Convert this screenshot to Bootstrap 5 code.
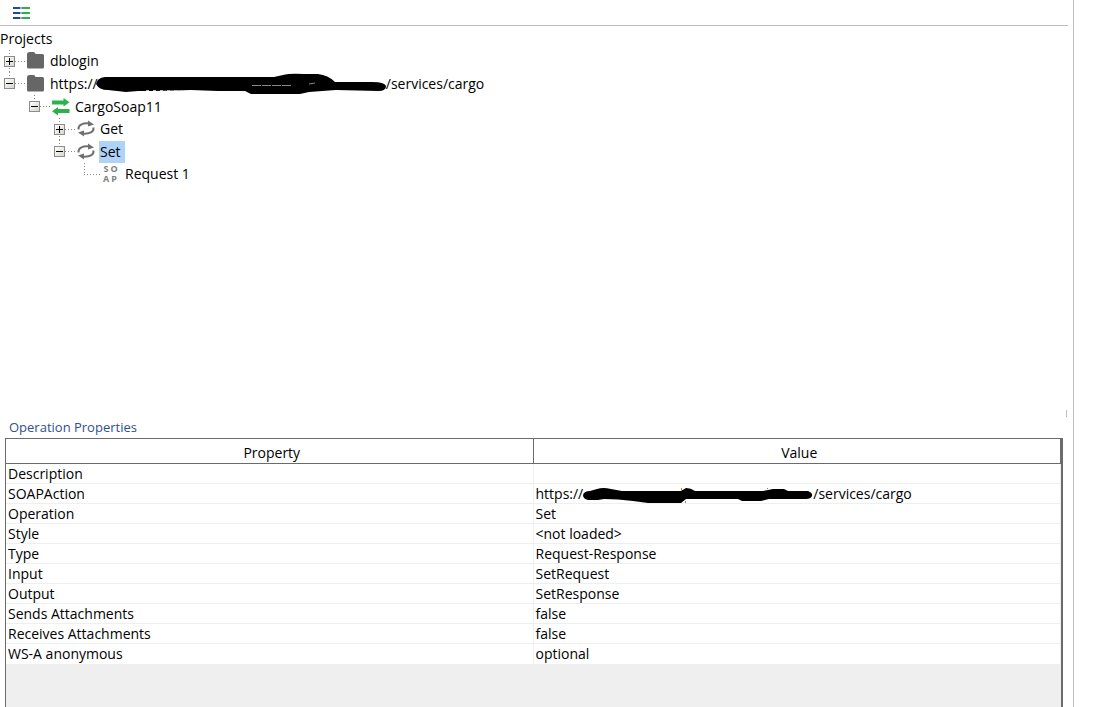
<!DOCTYPE html>
<html lang="en">
<head>
<meta charset="utf-8">
<meta name="viewport" content="width=device-width, initial-scale=1">
<title>Projects</title>
<link href="https://cdn.jsdelivr.net/npm/bootstrap@5.3.0/dist/css/bootstrap.min.css" rel="stylesheet">
<style>
  body { font-family: "Open Sans", "Noto Sans", sans-serif; font-size: 14px; line-height: 22px; color: #000; background: #fff; }
  .workspace { border-right: 1px solid #bdbdbd; padding-right: 5px; min-width: 0; }
  .gutter { width: 40px; }
  .toolstrip { height: 26px; border-bottom: 1px solid #bdbdbd; padding-left: 13px; }
  .tool { line-height: 0; }
  .tree-title { height: 24px; line-height: 26px; }
  .tree-row { height: 22px; white-space: nowrap; }
  .tree-row.tall { height: 23px; }
  .tree-kids { padding-left: 25px; }
  /* dotted connector lines */
  .twig { width: 25px; height: 100%; flex: none;
    background:
      repeating-linear-gradient(#888 0 1px, transparent 1px 3px) 9px 0 / 1px 100% no-repeat,
      repeating-linear-gradient(90deg, #888 0 1px, transparent 1px 3px) 9px 50% / 16px 1px no-repeat; }
  .twig.last { background-size: 1px 50%, 16px 1px; }
  .knob { width: 11px; height: 11px; margin-left: 4px; border: 1px solid #8c8c8c; background: linear-gradient(135deg, #fff, #d8d5cf); line-height: 0; }
  .knob svg { display: block; }
  .glyph { width: 18px; height: 18px; flex: none; margin: 0 4px 0 2px; }
  .soap { display: grid; grid-template-columns: 8px 8px; text-align: center; font-size: 9px; font-weight: 700; line-height: 10px; height: 20px; color: #808080; }
  .label { padding: 0 1px; }
  .label.picked { background: #aed2f8; padding-right: 4px; }
  .label a, .props a { color: inherit; text-decoration: none; }
  .smudge { flex: none; }
  .label .smudge { margin-left: -2px; }
  .grip { width: 1px; height: 7px; background: #bdbdbd; margin: 0 1px 1px 0; }
  .panel-title { font-size: 13px; line-height: 18px; color: #2f4f8f; padding: 0 0 2px 9px; }
  .prop-box { margin: 0 5px; border: 1px solid #6b6b6b; border-width: 1px 2px 0 1px; background: #efefef; min-height: 269px; }
  .props { width: 100%; table-layout: fixed; border-collapse: separate; border-spacing: 0; background: #fff; }
  .props th { font-weight: 400; text-align: center; line-height: 20px; padding: 4px 0 0 5px; border-bottom: 1px solid #6b6b6b; border-right: 1px solid #6b6b6b; }
  .props td { height: 20px; line-height: 19px; padding: 0 0 0 2px; border-bottom: 1px solid #efefef; border-right: 1px solid #efefef; white-space: nowrap; }
  .props tr:last-child td { border-bottom-color: #fff; }
</style>
</head>
<body>
<svg class="d-none" aria-hidden="true">
  <symbol id="folder" viewBox="0 0 18 18"><path fill="#666" d="M0 2.500Q0 0 2.500 0H6.500Q8 0 8.500 2H15.500Q17 2 17 3.500V15q0 1.500-1.500 1.500h-14Q0 16.500 0 15z"/></symbol>
  <symbol id="swap" viewBox="0 0 18 18"><path fill="#2db24a" d="M0 2.500h11.500V0L17.500 4.200 11.500 8.500V6.500H0zM17.500 11H6V9L0 13.200 6 17.500v-2.500h11.500z"/></symbol>
  <symbol id="cycle" viewBox="0 0 18 18"><path fill="none" stroke="#707070" stroke-width="2" d="M1.500 9.500C1 5 5 2.800 13 3.500M16.500 7.500C17 12 13 14.200 5 13.500"/><path fill="#707070" d="M11 0.500L17 4.500 11 6.500zM7 10.500V16.500L1 12.500z"/></symbol>
  <symbol id="plus" viewBox="0 0 9 9"><path d="M1 4h7v1H1zM4 1h1v7H4z"/></symbol>
  <symbol id="minus" viewBox="0 0 9 9"><path d="M1 4h7v1H1z"/></symbol>
</svg>
<div class="d-flex min-vh-100">
  <main class="workspace flex-grow-1 d-flex flex-column">
    <header class="toolstrip d-flex align-items-center">
      <button class="tool btn p-0 border-0" type="button" aria-label="Toggle list">
        <svg width="17" height="13" viewBox="0 -1 17 13">
          <path fill="#1f4a9c" d="M0 0h7v2H0zM0 5h7v2H0zM0 10h7v2H0z"/>
          <path fill="#8fb5d6" d="M7 0h2v2H7zM7 5h2v2H7zM7 10h2v2H7z"/>
          <path fill="#2fae4e" d="M9 0h8v2H9zM9 5h8v2H9zM9 10h8v2H9z"/>
        </svg>
      </button>
    </header>

    <nav class="flex-grow-1" aria-label="Projects">
      <div class="tree-title">Projects</div>
      <ul class="list-unstyled mb-0">
        <li>
          <div class="tree-row d-flex align-items-center">
            <span class="twig d-flex align-items-center"><button class="knob p-0" type="button" aria-label="Expand dblogin"><svg width="9" height="9"><use href="#plus"/></svg></button></span>
            <svg class="glyph"><use href="#folder"/></svg>
            <span class="label">dblogin</span>
          </div>
        </li>
        <li>
          <div class="tree-row tall d-flex align-items-center">
            <span class="twig last d-flex align-items-center"><button class="knob p-0" type="button" aria-label="Collapse service"><svg width="9" height="9"><use href="#minus"/></svg></button></span>
            <svg class="glyph"><use href="#folder"/></svg>
            <span class="label d-flex"><a href="#">https://</a><svg class="smudge" width="290" height="22" viewBox="0 0 290 22"><path d="M0 11Q1 5 9 4H178L187 2Q194 0 208 1H222Q232 2 239 9H276Q290 9 290 14Q289 18 283 18L240 17Q226 18 213 19L204 21H155L149 18H122L95 17L60 18H42L30 19L12 17Q3 17 0 11Z"/><path stroke="#888" stroke-dasharray="9 1" fill="none" d="M156 12.500H196M213 11l6-1"/><path stroke="#bbb" stroke-dasharray="3 4" fill="none" d="M50 17.500H92"/></svg><a href="#">/services/cargo</a></span>
          </div>
          <ul class="list-unstyled tree-kids">
            <li>
              <div class="tree-row tall d-flex align-items-center">
                <span class="twig last d-flex align-items-center"><button class="knob p-0" type="button" aria-label="Collapse CargoSoap11"><svg width="9" height="9"><use href="#minus"/></svg></button></span>
                <svg class="glyph"><use href="#swap"/></svg>
                <span class="label">CargoSoap11</span>
              </div>
              <ul class="list-unstyled tree-kids">
                <li>
                  <div class="tree-row d-flex align-items-center">
                    <span class="twig d-flex align-items-center"><button class="knob p-0" type="button" aria-label="Expand Get"><svg width="9" height="9"><use href="#plus"/></svg></button></span>
                    <svg class="glyph"><use href="#cycle"/></svg>
                    <span class="label">Get</span>
                  </div>
                </li>
                <li>
                  <div class="tree-row tall d-flex align-items-center">
                    <span class="twig last d-flex align-items-center"><button class="knob p-0" type="button" aria-label="Collapse Set"><svg width="9" height="9"><use href="#minus"/></svg></button></span>
                    <svg class="glyph"><use href="#cycle"/></svg>
                    <span class="label picked">Set</span>
                  </div>
                  <ul class="list-unstyled tree-kids">
                    <li>
                      <div class="tree-row d-flex align-items-center">
                        <span class="twig last"></span>
                        <span class="glyph soap"><span>S</span><span>O</span><span>A</span><span>P</span></span>
                        <span class="label">Request 1</span>
                      </div>
                    </li>
                  </ul>
                </li>
              </ul>
            </li>
          </ul>
        </li>
      </ul>
    </nav>

    <div class="grip align-self-end"></div>
    <section aria-labelledby="props-title">
      <h2 class="panel-title mb-0 fw-normal" id="props-title">Operation Properties</h2>
      <div class="prop-box">
        <table class="props">
          <thead><tr><th scope="col">Property</th><th scope="col">Value</th></tr></thead>
          <tbody>
            <tr><td>Description</td><td></td></tr>
            <tr><td>SOAPAction</td><td><span class="d-flex"><a href="#">https://</a><svg class="smudge" width="230" height="19" viewBox="0 0 230 19"><path d="M0 11Q1 7 7 7L14 5Q20 3 28 5L39 7H98L103 4Q108 4 112 7H180L190 5H201L205 7H225Q230 9 229 12Q228 15 223 15H186L178 17H159L155 15H103L98 19H65L50 17Q35 15 21 15L15 16H5Q0 15 0 11Z"/><path fill="#c08030" d="M98 4h1v3h-1zM102 17h1v2h-1z"/><path fill="#5090c0" d="M184 4h1v1h-1z"/></svg><a href="#">/services/cargo</a></span></td></tr>
            <tr><td>Operation</td><td>Set</td></tr>
            <tr><td>Style</td><td>&lt;not loaded&gt;</td></tr>
            <tr><td>Type</td><td>Request-Response</td></tr>
            <tr><td>Input</td><td>SetRequest</td></tr>
            <tr><td>Output</td><td>SetResponse</td></tr>
            <tr><td>Sends Attachments</td><td>false</td></tr>
            <tr><td>Receives Attachments</td><td>false</td></tr>
            <tr><td>WS-A anonymous</td><td>optional</td></tr>
          </tbody>
        </table>
      </div>
    </section>
  </main>
  <aside class="gutter flex-shrink-0"></aside>
</div>
<script src="https://cdn.jsdelivr.net/npm/bootstrap@5.3.0/dist/js/bootstrap.bundle.min.js"></script>
</body>
</html>
